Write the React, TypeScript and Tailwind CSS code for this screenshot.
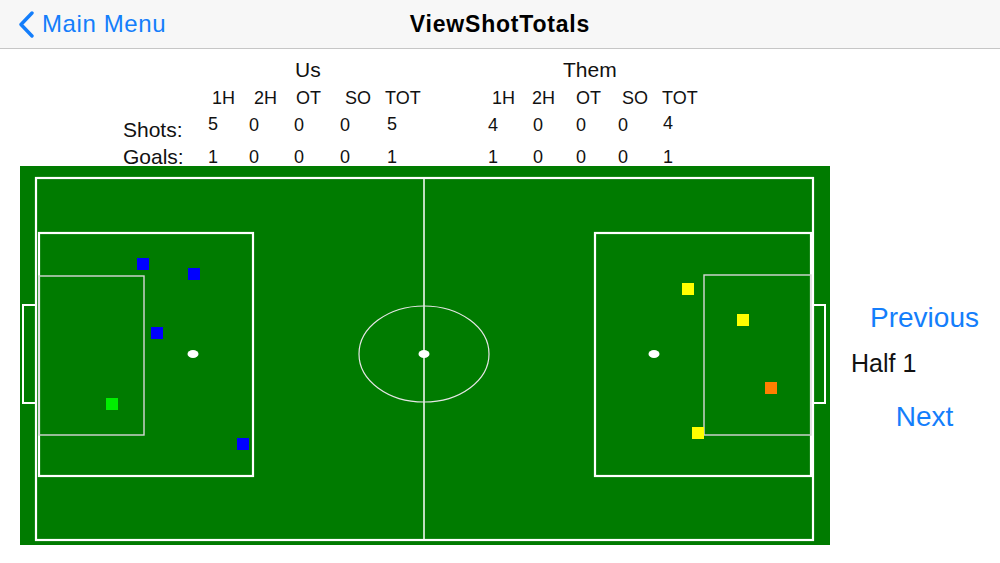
import React from 'react';

type Shot = { x: number; y: number; color: string };

const shots: Shot[] = [
  { x: 137, y: 258, color: '#0000ff' },
  { x: 188, y: 268, color: '#0000ff' },
  { x: 151, y: 327, color: '#0000ff' },
  { x: 106, y: 398, color: '#00ee00' },
  { x: 237, y: 438, color: '#0000ff' },
  { x: 682, y: 283, color: '#ffff00' },
  { x: 737, y: 314, color: '#ffff00' },
  { x: 765, y: 382, color: '#ff7f00' },
  { x: 692, y: 427, color: '#ffff00' },
];

const Field: React.FC = () => (
  <svg width="810" height="379" viewBox="20 166 810 379" className="block shrink-0 ml-[20px]">
    <rect x="20" y="166" width="810" height="379" fill="#007b00" />
    {/* outer lines */}
    <rect x="36" y="178" width="777" height="362" fill="none" stroke="#ffffff" strokeWidth="2.2" />
    <line x1="424" y1="178" x2="424" y2="540" stroke="#ffffff" strokeWidth="1.5" />
    <ellipse cx="424" cy="354" rx="65" ry="48" fill="none" stroke="#e6e6e6" strokeWidth="1.2" />
    <ellipse cx="424" cy="354" rx="5.5" ry="4" fill="#ffffff" />

    {/* left end */}
    <rect x="39" y="233" width="214" height="243" fill="none" stroke="#ffffff" strokeWidth="2.2" />
    <rect x="39" y="276" width="105" height="159" fill="none" stroke="#d8d8d8" strokeWidth="1.4" />
    <rect x="23" y="305" width="13" height="98" fill="none" stroke="#ffffff" strokeWidth="2" />
    <ellipse cx="193" cy="354" rx="5.5" ry="4" fill="#ffffff" />

    {/* right end */}
    <rect x="595" y="233" width="216" height="243" fill="none" stroke="#ffffff" strokeWidth="2.2" />
    <rect x="704" y="275" width="107" height="160" fill="none" stroke="#d8d8d8" strokeWidth="1.4" />
    <rect x="813" y="305" width="12" height="98" fill="none" stroke="#ffffff" strokeWidth="2" />
    <ellipse cx="654" cy="354" rx="5.5" ry="4" fill="#ffffff" />

    {shots.map((s, i) => (
      <rect key={i} x={s.x} y={s.y} width="12" height="12" fill={s.color} />
    ))}
  </svg>
);

export default function App() {
  return (
    <div className="w-[1000px] h-[563px] overflow-hidden bg-white text-black font-['Liberation_Sans',Arial,sans-serif]">
      {/* Nav bar */}
      <div className="h-[49px] bg-[#f7f7f7] border-b border-[#c6c6c6] grid grid-cols-[1fr_auto_1fr] items-center">
        <div className="flex items-center">
          <svg width="16" height="27" viewBox="0 0 16 27" className="ml-[18px]">
            <path d="M14 2 L3 13.5 L14 25" fill="none" stroke="#147efb" strokeWidth="3.4" strokeLinecap="round" strokeLinejoin="round" />
          </svg>
          <span className="ml-[8px] text-[24px] leading-none tracking-[0.6px] text-[#147efb]">Main Menu</span>
        </div>
        <div className="text-[23px] leading-none font-bold tracking-[0.8px]">ViewShotTotals</div>
        <div />
      </div>

      {/* Totals */}
      <div className="h-[117px] flex flex-col">
        <div className="mt-[10px] h-[21px] flex text-[21px] leading-none text-[#111]">
          <div className="w-[295px]" />
          <div className="w-[268px]">Us</div>
          <div>Them</div>
        </div>

        <div className="mt-[9px] h-[18px] flex text-[18px] leading-none text-[#111]">
          <div className="w-[212px]" />
          <div className="w-[42px]">1H</div>
          <div className="w-[42px]">2H</div>
          <div className="w-[49px]">OT</div>
          <div className="w-[40px]">SO</div>
          <div className="w-[107px]">TOT</div>
          <div className="w-[40px]">1H</div>
          <div className="w-[44px]">2H</div>
          <div className="w-[46px]">OT</div>
          <div className="w-[40px]">SO</div>
          <div>TOT</div>
        </div>

        <div className="mt-[9px] h-[24px] flex items-start text-[18px] leading-none text-[#111]">
          <div className="w-[123px]" />
          <div className="w-[85px] mt-[3px] text-[21px]">Shots:</div>
          <div className="w-[41px] -mt-[1px]">5</div>
          <div className="w-[45px]">0</div>
          <div className="w-[46px]">0</div>
          <div className="w-[47px]">0</div>
          <div className="w-[101px] -mt-[1px]">5</div>
          <div className="w-[45px]">4</div>
          <div className="w-[43px]">0</div>
          <div className="w-[42px]">0</div>
          <div className="w-[45px]">0</div>
          <div className="-mt-[2px]">4</div>
        </div>

        <div className="mt-[6px] h-[21px] flex items-start text-[18px] leading-none text-[#111]">
          <div className="w-[123px]" />
          <div className="w-[85px] text-[21px]">Goals:</div>
          <div className="w-[41px] mt-[2px]">1</div>
          <div className="w-[45px] mt-[2px]">0</div>
          <div className="w-[46px] mt-[2px]">0</div>
          <div className="w-[47px] mt-[2px]">0</div>
          <div className="w-[101px] mt-[2px]">1</div>
          <div className="w-[45px] mt-[2px]">1</div>
          <div className="w-[43px] mt-[2px]">0</div>
          <div className="w-[42px] mt-[2px]">0</div>
          <div className="w-[45px] mt-[2px]">0</div>
          <div className="mt-[2px]">1</div>
        </div>
      </div>

      {/* Field and half switcher */}
      <div className="flex">
        <Field />
        <div className="flex-1 flex flex-col items-center pl-[19px] pt-[138px]">
          <button type="button" className="text-[28px] leading-none text-[#147efb]">Previous</button>
          <div className="self-start ml-[2px] mt-[19px] text-[25px] leading-none text-[#111]">Half 1</div>
          <button type="button" className="mt-[27px] text-[28px] leading-none text-[#147efb]">Next</button>
        </div>
      </div>
    </div>
  );
}
